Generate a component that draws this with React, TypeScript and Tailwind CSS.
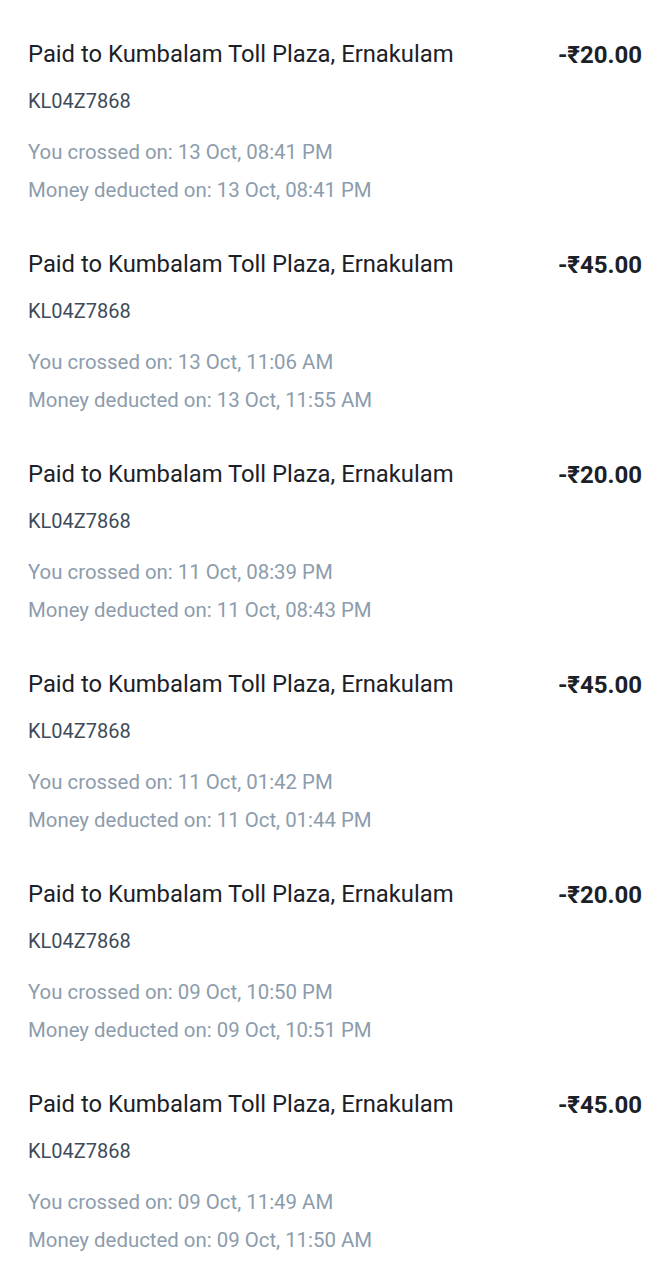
const entries = [
  { amount: "20.00", crossed: "13 Oct, 08:41 PM", deducted: "13 Oct, 08:41 PM" },
  { amount: "45.00", crossed: "13 Oct, 11:06 AM", deducted: "13 Oct, 11:55 AM" },
  { amount: "20.00", crossed: "11 Oct, 08:39 PM", deducted: "11 Oct, 08:43 PM" },
  { amount: "45.00", crossed: "11 Oct, 01:42 PM", deducted: "11 Oct, 01:44 PM" },
  { amount: "20.00", crossed: "09 Oct, 10:50 PM", deducted: "09 Oct, 10:51 PM" },
  { amount: "45.00", crossed: "09 Oct, 11:49 AM", deducted: "09 Oct, 11:50 AM" },
];

export default function App() {
  return (
    <div
      className="w-[669px] min-h-[1280px] bg-white pt-[40px]"
      style={{ fontFamily: "Roboto, 'Noto Sans', sans-serif" }}
    >
      {entries.map((e, i) => (
        <div key={i} className="h-[210px] pl-[28px] pr-[27px]">
          <div className="flex items-center justify-between h-[30px]">
            <span className="text-[23.8px] text-[#1c2127]">Paid to Kumbalam Toll Plaza, Ernakulam</span>
            <span className="text-[24px] font-bold text-[#1c2127]">-₹{e.amount}</span>
          </div>
          <div className="mt-[16px] h-[30px] flex items-center text-[20px] text-[#3d4b5a]">KL04Z7868</div>
          <div className="mt-[21px] h-[30px] flex items-center text-[20.4px] text-[#8c9cac]">
            You crossed on: {e.crossed}
          </div>
          <div className="mt-[8px] h-[30px] flex items-center text-[20.4px] text-[#8c9cac]">
            Money deducted on: {e.deducted}
          </div>
        </div>
      ))}
    </div>
  );
}
